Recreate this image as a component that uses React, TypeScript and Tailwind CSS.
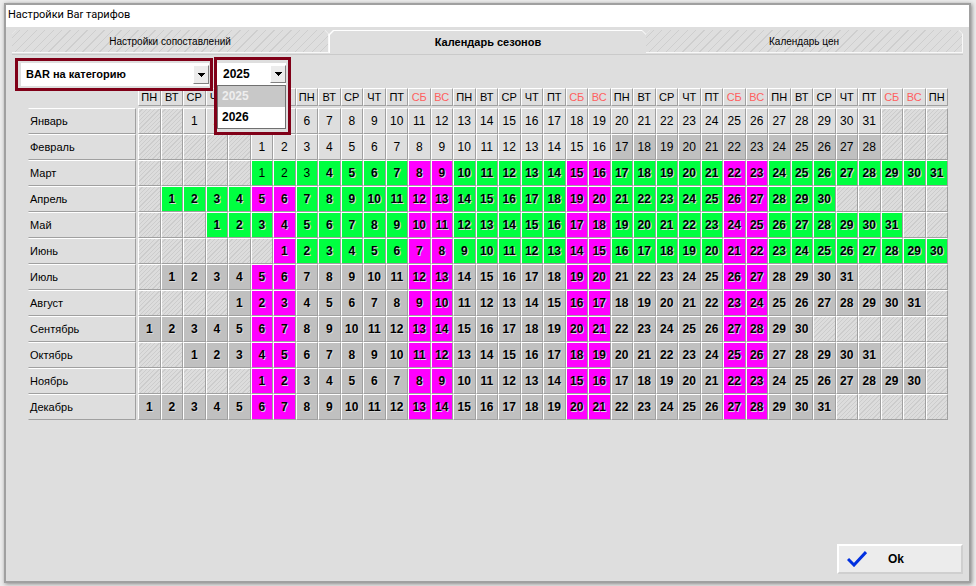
import clsx from 'clsx'
import { useState } from 'react'

const WEEKDAYS = ['ПН', 'ВТ', 'СР', 'ЧТ', 'ПТ', 'СБ', 'ВС']
const COLUMNS = Array.from({ length: 36 }, (_, i) => i)
const YEARS = ['2025', '2026']
const TABS = ['Настройки сопоставлений', 'Календарь сезонов', 'Календарь цен']

type Kind = 'plain' | 'gray' | 'green'

// offset - column of the 1st day
const MONTHS: { name: string; offset: number; days: number; kind: Kind }[] = [
  { name: 'Январь', offset: 2, days: 31, kind: 'plain' },
  { name: 'Февраль', offset: 5, days: 28, kind: 'plain' },
  { name: 'Март', offset: 5, days: 31, kind: 'green' },
  { name: 'Апрель', offset: 1, days: 30, kind: 'green' },
  { name: 'Май', offset: 3, days: 31, kind: 'green' },
  { name: 'Июнь', offset: 6, days: 30, kind: 'green' },
  { name: 'Июль', offset: 1, days: 31, kind: 'gray' },
  { name: 'Август', offset: 4, days: 31, kind: 'gray' },
  { name: 'Сентябрь', offset: 0, days: 30, kind: 'gray' },
  { name: 'Октябрь', offset: 2, days: 31, kind: 'gray' },
  { name: 'Ноябрь', offset: 5, days: 30, kind: 'gray' },
  { name: 'Декабрь', offset: 0, days: 31, kind: 'gray' },
]

const isWeekend = (col: number) => col % 7 > 4

const hasWeekendTariff = (month: number, day: number, col: number) =>
  isWeekend(col) && col < 33 && !(month === 4 && day === 3)

function getDayStyle(month: number, day: number, col: number) {
  const { kind } = MONTHS[month]

  if (month === 0) return 'bg-[#dedede]'
  if (month === 1) return day >= 17 ? 'bg-[#c0c0c0]' : 'bg-[#dedede]'

  const bold = 'font-bold [text-shadow:1px_1px_0_#d8d8d8]'
  // first days of March are already in the past
  if (month === 2 && day <= 3) return 'bg-[#00ff40]'
  if (hasWeekendTariff(month, day, col)) return clsx('bg-[#ff00ff]', bold)

  return clsx(kind === 'green' ? 'bg-[#00ff40]' : 'bg-[#c0c0c0]', bold)
}

function Arrow() {
  return (
    <span className="pointer-events-none absolute top-0.5 right-0 bottom-0.5 flex w-4 items-center justify-center border border-t-white border-l-white border-r-[#808080] border-b-[#808080] bg-[#ececec]">
      <svg width="7" height="4" viewBox="0 0 7 4" shapeRendering="crispEdges">
        <path d="M0 0h7v1h-7zM1 1h5v1h-5zM2 2h3v1h-3zM3 3h1v1h-1z" />
      </svg>
    </span>
  )
}

function Tab({ label, active, onClick }: { label: string; active: boolean; onClick: () => void }) {
  return (
    <button
      type="button"
      role="tab"
      aria-selected={active}
      onClick={onClick}
      className={clsx(
        'flex h-[23px] flex-1 [clip-path:polygon(0_4px,4px_0,calc(100%-4px)_0,100%_4px,100%_100%,0_100%)]',
        active ? 'bg-white pt-px pl-px' : 'bg-[#f8f8f8] pr-px pb-px'
      )}
    >
      <span
        className={clsx(
          'flex h-full w-full items-center justify-center [clip-path:polygon(0_4px,4px_0,calc(100%-4px)_0,100%_4px,100%_100%,0_100%)]',
          active
            ? 'bg-[#dedede] text-[11px] font-bold'
            : 'bg-[#dedede] bg-[repeating-linear-gradient(135deg,#dedede_0px,#dedede_5px,#cecece_5px,#cecece_6px)] text-[10px]'
        )}
      >
        {label}
      </span>
    </button>
  )
}

function SeasonTable() {
  return (
    <table className="w-full table-fixed border-separate border-spacing-0">
      <thead>
        <tr>
          <td className="w-[110px] p-0" />
          {COLUMNS.map((col) => (
            <th key={col} scope="col" className="p-0 pb-0.5 text-[11px] font-normal">
              <div
                className={clsx(
                  'flex h-[18px] items-center justify-center border border-t-white border-l-white border-r-[#a0a0a0] border-b-[#a0a0a0]',
                  isWeekend(col) && 'text-[#ff6060]'
                )}
              >
                {WEEKDAYS[col % 7]}
              </div>
            </th>
          ))}
        </tr>
      </thead>
      <tbody>
        {MONTHS.map(({ name, offset, days }, month) => (
          <tr key={name}>
            <th scope="row" className="p-0 pr-0.5 text-left font-normal">
              <div className="flex h-[26px] items-center border border-t-white border-l-[#dedede] border-r-[#a0a0a0] border-b-[#a0a0a0] pl-px text-[11px]">
                {name}
              </div>
            </th>
            {COLUMNS.map((col) => {
              const day = col - offset + 1
              const filled = day >= 1 && day <= days

              return (
                <td
                  key={col}
                  className={clsx(
                    'h-[26px] border border-t-white border-l-white border-r-[#a0a0a0] border-b-[#a0a0a0] p-0 text-center leading-4',
                    filled
                      ? getDayStyle(month, day, col)
                      : 'bg-[repeating-linear-gradient(135deg,#dcdcdc_0px,#dcdcdc_2px,#cccccc_2px,#cccccc_3px)]'
                  )}
                >
                  {filled && day}
                </td>
              )
            })}
          </tr>
        ))}
      </tbody>
    </table>
  )
}

export default function App() {
  const [tab, setTab] = useState(1)
  const [year, setYear] = useState('2025')

  return (
    <div className="flex min-h-screen bg-[#ececec] pt-[3px] pr-[5px] pb-[3px] pl-1 font-['Liberation_Sans',Arial,sans-serif] text-[12px] text-black">
      <div className="flex flex-1 flex-col border-2 border-[#a0a0a0] bg-[#dedede] shadow-[1px_1px_4px_#888]">
        <h1 className="h-[22px] bg-white pl-0.5 font-[Roboto,sans-serif] text-[11px] leading-5">
          Настройки Bar тарифов
        </h1>

        <div className="px-1.5 pt-[3px]">
          <div role="tablist" className="flex border-b border-[#cacaca] pb-px">
            {TABS.map((label, i) => (
              <Tab key={label} label={label} active={tab === i} onClick={() => setTab(i)} />
            ))}
          </div>
        </div>

        <main className="flex flex-1 flex-col pt-0.5">
          <div className="relative z-10 -mb-0.5 flex h-[33px] items-start gap-px pl-[9px]">
            <div className="mt-px w-[198px] border-[3px] border-[#800018] bg-[#dedede] py-0.5 pr-px pl-[3px]">
              <div className="relative">
                <select
                  aria-label="Тариф"
                  className="block h-[23px] w-full appearance-none bg-white pl-[5px] text-[11px] font-bold outline-none"
                >
                  <option>BAR на категорию</option>
                </select>
                <Arrow />
              </div>
            </div>

            <div className="w-[77px] border-[3px] border-[#800018] bg-[#dedede] pt-[3px] pr-0.5 pb-[3px]">
              <div className="relative">
                <select
                  aria-label="Год"
                  value={year}
                  onChange={(e) => setYear(e.target.value)}
                  className="block h-[22px] w-full appearance-none bg-white pl-[6px] text-[12px] font-bold outline-none"
                >
                  {YEARS.map((item) => (
                    <option key={item}>{item}</option>
                  ))}
                </select>
                <Arrow />
              </div>
              <ul role="listbox" aria-label="Годы" className="border border-[#707070] bg-white font-bold">
                {YEARS.map((item) => (
                  <li
                    key={item}
                    role="option"
                    aria-selected={item === year}
                    onClick={() => setYear(item)}
                    className={clsx(
                      'h-[21px] pl-1 leading-5',
                      item === year && 'bg-[#c8c8c8] text-[#eeeeee]'
                    )}
                  >
                    {item}
                  </li>
                ))}
              </ul>
            </div>
          </div>

          <div className="pr-[21px] pl-[22px]">
            <SeasonTable />
          </div>

          <div className="mt-auto flex justify-end pr-1.5 pb-[7px]">
            <button
              type="button"
              className="flex h-[30px] w-[126px] items-center border-2 border-t-white border-l-white border-r-[#cfcfcf] border-b-[#cfcfcf] bg-[#ececec] pl-2 text-[12px] font-bold"
            >
              <svg width="20" height="16" viewBox="0 0 20 16" fill="none">
                <path d="M1 8l6 6L19 1" stroke="#0030e0" strokeWidth="3" />
              </svg>
              <span className="pl-[21px]">Ok</span>
            </button>
          </div>
        </main>
      </div>
    </div>
  )
}
